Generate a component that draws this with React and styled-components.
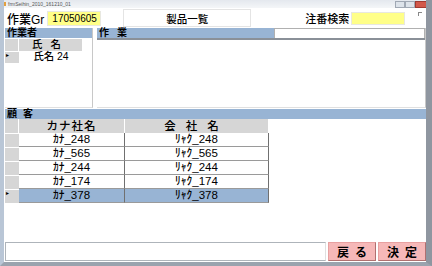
import React from "react";
import styled, { createGlobalStyle } from "styled-components";

const Global = createGlobalStyle`
  html, body { margin: 0; padding: 0; background: #fff; }
  body { font-family: "Liberation Sans", "Noto Sans CJK JP", sans-serif; }
`;

const Window = styled.div`
  width: 432px;
  height: 266px;
  box-sizing: border-box;
  display: flex;
  flex-direction: column;
  background: #fff;
  border-left: 4px solid #b9c6d6;
  border-right: 6px solid #8f96a0;
  border-bottom: 4px solid #9aa3ae;
  overflow: hidden;
`;

const TitleBar = styled.div`
  height: 8px;
  margin-left: -4px;
  margin-right: -6px;
  display: flex;
  align-items: center;
  background: linear-gradient(#e4e8ee, #f4f6f8);
  font-size: 5px;
  color: #555;
  padding-left: 2px;
  gap: 2px;
  .icon { width: 4px; height: 4px; background: #e2a040; }
  .controls { margin-left: auto; display: flex; height: 7px; margin-right: 3px; }
  .btn { width: 10px; background: #dde3ea; border: 1px solid #a0a8b4; box-sizing: border-box; }
  .close { width: 14px; background: #d2584a; border: 1px solid #a03a30; }
`;

const TopBar = styled.div`
  height: 20px;
  display: flex;
  align-items: center;
  color: #000;
  padding-left: 3px;
`;

const Label = styled.span`
  font-size: ${(p) => p.size || 12}px;
  font-weight: 500;
  margin-left: ${(p) => p.ml || 0}px;
`;

const YellowBox = styled.div`
  width: ${(p) => p.w}px;
  height: ${(p) => p.h}px;
  background: #ffff88;
  border: 1px solid #e8e8e0;
  margin-left: ${(p) => p.ml || 3}px;
  font-size: 10px;
  line-height: ${(p) => p.h - 2}px;
  padding-left: 4px;
  box-sizing: border-box;
`;

const TitleBox = styled.div`
  margin-left: 22px;
  width: 128px;
  height: 18px;
  border: 1px solid #e4e4e4;
  box-sizing: border-box;
  display: flex;
  align-items: center;
  justify-content: center;
  font-size: 10.5px;
  font-weight: 500;
`;

const Corner = styled.div`
  margin-left: auto;
  margin-right: 4px;
  align-self: flex-start;
  margin-top: 4px;
  width: 3px;
  height: 3px;
  border-top: 1px solid #888;
  border-left: 1px solid #888;
`;

const MainRow = styled.div`
  display: flex;
  height: 80px;
  padding-left: 1px;
  gap: 4px;
`;

const Panel = styled.div`
  width: ${(p) => p.w}px;
  display: flex;
  flex-direction: column;
  border-right: 1px solid #c8c8c8;
  border-bottom: 1px solid #e0e0e0;
`;

const HeaderBar = styled.div`
  height: 10px;
  background: #98b4d4;
  font-size: 10px;
  line-height: 10px;
  font-weight: 700;
  padding-left: 2px;
  letter-spacing: ${(p) => p.spacing || 0}px;
  width: ${(p) => (p.w ? p.w + "px" : "auto")};
  flex: ${(p) => (p.w ? "none" : "1")};
`;

const HeaderRow = styled.div`
  display: flex;
  border-bottom: ${(p) => (p.lined ? "2px solid #8a9098" : "none")};
  margin-bottom: ${(p) => (p.lined ? 0 : 1)}px;
`;

const HeaderInput = styled.div`
  flex: 1;
  height: 9px;
  border: 1px solid #b0b0b0;
  border-bottom: none;
  background: #fff;
`;

const Grid = styled.div`
  display: grid;
  grid-template-columns: ${(p) => p.cols};
  font-size: ${(p) => p.size || 11.5}px;
  font-weight: 500;
  align-self: flex-start;
`;

const HeadCell = styled.div`
  height: ${(p) => p.h}px;
  line-height: ${(p) => p.h}px;
  background: #d6d6d6;
  border-right: 1px solid #fff;
  text-align: center;
  letter-spacing: ${(p) => p.spacing || 0}px;
`;

const RowHead = styled.div`
  height: ${(p) => p.h}px;
  background: #d6d6d6;
  border-top: 1px solid #fff;
  box-sizing: border-box;
  position: relative;
  &::after {
    content: "${(p) => (p.current ? "▸" : "")}";
    position: absolute;
    left: 1px;
    top: -1px;
    font-size: 6px;
  }
`;

const Cell = styled.div`
  height: ${(p) => p.h}px;
  line-height: ${(p) => p.h - 1}px;
  box-sizing: border-box;
  text-align: center;
  background: ${(p) => (p.sel ? "#98b4d4" : "#fff")};
  border-right: ${(p) => (p.plain ? "none" : "1px solid #707070")};
  border-bottom: ${(p) => (p.plain ? "none" : "1px solid #9a9a9a")};
`;

const Section = styled.div`
  display: flex;
  flex-direction: column;
  margin-top: 1px;
  padding-left: 1px;
`;

const Footer = styled.div`
  display: flex;
  height: 19px;
  padding-left: 1px;
  gap: 2px;
  margin-top: auto;
  margin-bottom: 1px;
`;

const FooterInput = styled.div`
  flex: 1;
  border: 1px solid #aeb4ba;
  border-right-color: #e0e0e0;
  background: #fff;
`;

const PinkButton = styled.div`
  width: 48px;
  background: #f6b8b8;
  border: 1px solid #e8a0a0;
  border-right-color: #b07070;
  border-bottom-color: #b07070;
  box-sizing: border-box;
  display: flex;
  align-items: center;
  justify-content: center;
  font-size: 12px;
  font-weight: 700;
  letter-spacing: 6px;
  padding-left: 6px;
`;

const customers = [
  ["ｶﾅ_248", "ﾘｬｸ_248"],
  ["ｶﾅ_565", "ﾘｬｸ_565"],
  ["ｶﾅ_244", "ﾘｬｸ_244"],
  ["ｶﾅ_174", "ﾘｬｸ_174"],
  ["ｶﾅ_378", "ﾘｬｸ_378"],
];

export default function App() {
  return (
    <>
      <Global />
      <Window>
        <TitleBar>
          <div className="icon" />
          <span>frmSeihin_2010_161210_01</span>
          <div className="controls">
            <div className="btn" />
            <div className="btn" />
            <div className="btn close" />
          </div>
        </TitleBar>
        <TopBar>
          <Label>作業Gr</Label>
          <YellowBox w={54} h={15}>17050605</YellowBox>
          <TitleBox>製品一覧</TitleBox>
          <Label size={11} ml={54}>注番検索</Label>
          <YellowBox w={54} h={13} ml={2} />
          <Corner />
        </TopBar>
        <MainRow>
          <Panel w={87}>
            <HeaderRow>
              <HeaderBar>作業者</HeaderBar>
            </HeaderRow>
            <Grid cols="14px 64px" size={10.4}>
              <HeadCell h={12} />
              <HeadCell h={12} spacing={8}>氏名</HeadCell>
              <RowHead h={12} current />
              <Cell h={12} plain>氏名 24</Cell>
            </Grid>
          </Panel>
          <Panel w={328}>
            <HeaderRow lined>
              <HeaderBar w={175} spacing={8}>作業</HeaderBar>
              <HeaderInput />
            </HeaderRow>
          </Panel>
        </MainRow>
        <Section>
          <HeaderBar style={{ flex: "none" }} spacing={6}>顧客</HeaderBar>
          <Grid cols="14px 106px 144px">
            <HeadCell h={14} />
            <HeadCell h={14} spacing={1}>カナ社名</HeadCell>
            <HeadCell h={14} spacing={10}>会社名</HeadCell>
            {customers.map(([kana, name], i) => (
              <React.Fragment key={kana}>
                <RowHead h={14} current={i === 4} />
                <Cell h={14} sel={i === 4}>{kana}</Cell>
                <Cell h={14} sel={i === 4}>{name}</Cell>
              </React.Fragment>
            ))}
          </Grid>
        </Section>
        <Footer>
          <FooterInput />
          <PinkButton>戻る</PinkButton>
          <PinkButton>決定</PinkButton>
        </Footer>
      </Window>
    </>
  );
}
